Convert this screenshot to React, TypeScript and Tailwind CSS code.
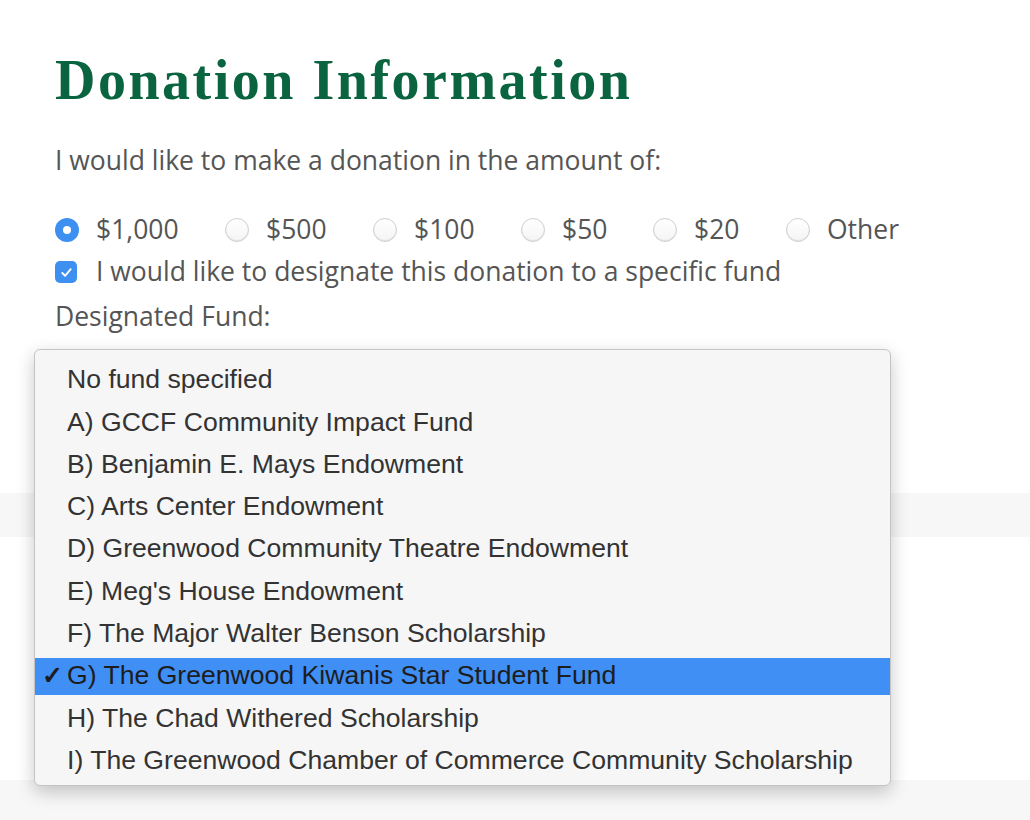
import React from 'react'

const amounts = ['$1,000', '$500', '$100', '$50', '$20', 'Other']
const radioX = ['w-[170px]', 'w-[148px]', 'w-[148px]', 'w-[132px]', 'w-[133px]', 'w-auto']

const funds = [
  'No fund specified',
  'A) GCCF Community Impact Fund',
  'B) Benjamin E. Mays Endowment',
  'C) Arts Center Endowment',
  'D) Greenwood Community Theatre Endowment',
  "E) Meg's House Endowment",
  'F) The Major Walter Benson Scholarship',
  'G) The Greenwood Kiwanis Star Student Fund',
  'H) The Chad Withered Scholarship',
  'I) The Greenwood Chamber of Commerce Community Scholarship',
]

function Radio({ checked }: { checked: boolean }) {
  if (checked) {
    return (
      <span className="flex h-[24px] w-[24px] shrink-0 items-center justify-center rounded-full bg-[#3d8ff0]">
        <span className="h-[8px] w-[8px] rounded-full bg-white" />
      </span>
    )
  }
  return (
    <span className="h-[24px] w-[24px] shrink-0 rounded-full border border-[#cfcfcf] bg-gradient-to-b from-white to-[#f4f4f4] shadow-[inset_0_-1px_1px_rgba(0,0,0,0.08)]" />
  )
}

export default function App() {
  return (
    <div className="relative h-[820px] w-[1030px] overflow-hidden bg-white">
      {/* background bands from the form below */}
      <div className="absolute left-0 top-[493px] h-[44px] w-full bg-[#f7f7f7]" />
      <div className="absolute left-0 top-[780px] h-[40px] w-full bg-[#f7f7f7]" />

      <div className="relative px-[55px] pt-[48px] font-['Open_Sans',sans-serif] text-[26.5px] text-[#555]">
        <h1 className="font-['Liberation_Serif',serif] text-[56px] font-bold leading-[64px] tracking-[2.5px] text-[#0b6440]">
          Donation Information
        </h1>
        <p className="mt-[30px] leading-[36px]">I would like to make a donation in the amount of:</p>

        <div className="mt-[34px] flex h-[36px] items-center">
          {amounts.map((a, i) => (
            <label key={a} className={`flex items-center gap-[17px] ${radioX[i]}`}>
              <Radio checked={i === 0} />
              <span>{a}</span>
            </label>
          ))}
        </div>

        <label className="mt-[6px] flex h-[36px] items-center gap-[19px]">
          <span className="flex h-[22px] w-[22px] items-center justify-center rounded-[5px] bg-[#3d8ff0]">
            <svg viewBox="0 0 16 16" className="h-[15px] w-[15px]" fill="none" stroke="white" strokeWidth="2" strokeLinecap="round" strokeLinejoin="round">
              <path d="M3.5 8.5l3 3 6-7" />
            </svg>
          </span>
          <span>I would like to designate this donation to a specific fund</span>
        </label>

        <p className="mt-[8px] leading-[36px]">Designated Fund:</p>
      </div>

      {/* open select menu */}
      <div className="absolute left-[34px] top-[349px] w-[857px] rounded-[6px] border border-[#c4c4c4] bg-[#f6f6f6] pb-[3px] pt-[9px] font-['Liberation_Sans',Arial,sans-serif] text-[26.6px] text-[#333] shadow-[0_6px_18px_rgba(0,0,0,0.22)]">
        {funds.map((f, i) => {
          const sel = i === 7
          return (
            <div key={f} className="flex h-[42.3px] items-center">
              <div className={`flex h-[37px] w-full items-center ${sel ? 'bg-[#3f8ff5] text-[#1d1d1d]' : ''}`}>
                <span className="w-[32px] pl-[7px] text-[25px] font-bold">{sel ? '✓' : ''}</span>
                <span className="whitespace-nowrap">{f}</span>
              </div>
            </div>
          )
        })}
      </div>
    </div>
  )
}
